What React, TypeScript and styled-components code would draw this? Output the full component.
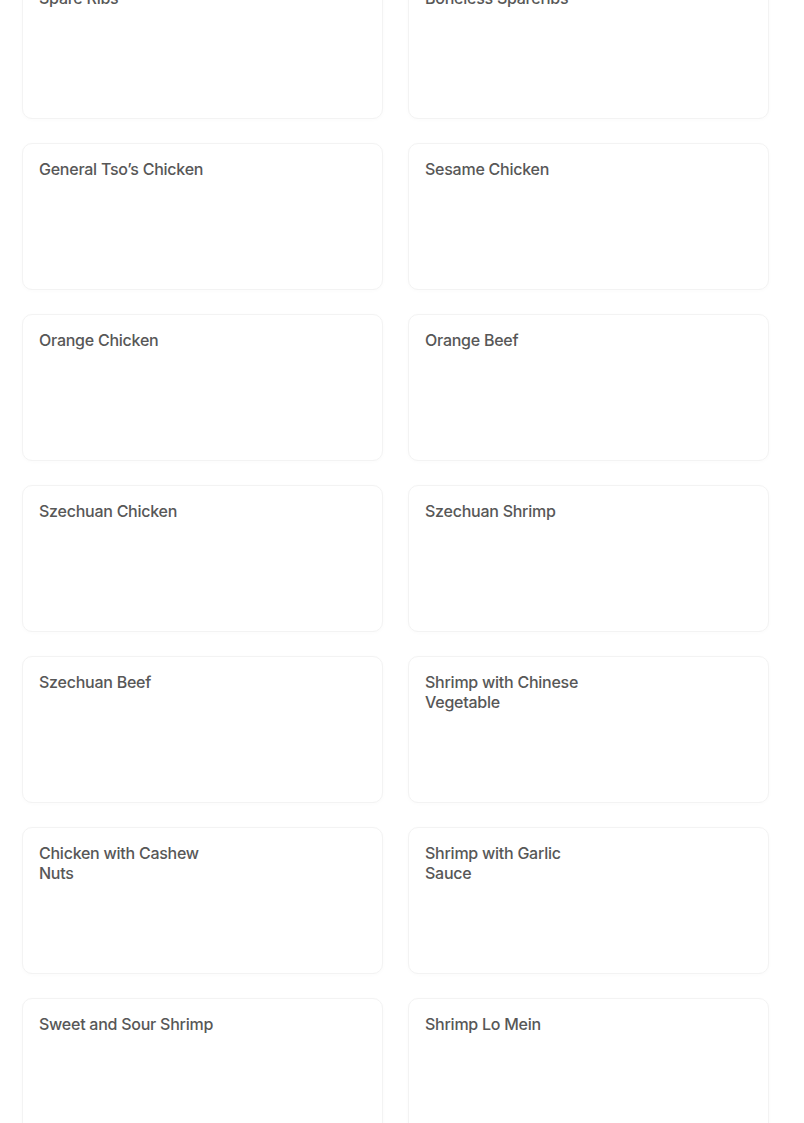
import React from "react";
import styled, { createGlobalStyle } from "styled-components";

const GlobalStyle = createGlobalStyle`
  html, body { margin: 0; padding: 0; background: #ffffff; }
  body { font-family: Inter, "Noto Sans", Arial, sans-serif; overflow: hidden; }
`;

const Page = styled.div`
  padding: 0 35px 0 22px;
  overflow: hidden;
  height: 1123px;
`;

const Grid = styled.div`
  display: grid;
  grid-template-columns: 1fr 1fr;
  column-gap: 25px;
  row-gap: 24px;
  margin-top: -28px;
`;

const Card = styled.div`
  box-sizing: border-box;
  height: 147px;
  background: #ffffff;
  border: 1px solid #f3f3f3;
  border-radius: 10px;
  box-shadow: 0 1px 4px rgba(0, 0, 0, 0.02);
  padding: 15px 16px 16px;
`;

const Title = styled.div`
  max-width: 180px;
  font-size: 16px;
  font-weight: 500;
  line-height: 20px;
  color: #575757;
  letter-spacing: -0.25px;
`;

const items = [
  "Spare Ribs",
  "Boneless Spareribs",
  "General Tso\u2019s Chicken",
  "Sesame Chicken",
  "Orange Chicken",
  "Orange Beef",
  "Szechuan Chicken",
  "Szechuan Shrimp",
  "Szechuan Beef",
  "Shrimp with Chinese Vegetable",
  "Chicken with Cashew Nuts",
  "Shrimp with Garlic Sauce",
  "Sweet and Sour Shrimp",
  "Shrimp Lo Mein",
];

export default function App() {
  return (
    <>
      <GlobalStyle />
      <Page>
        <Grid>
          {items.map((name) => (
            <Card key={name}>
              <Title>{name}</Title>
            </Card>
          ))}
        </Grid>
      </Page>
    </>
  );
}
